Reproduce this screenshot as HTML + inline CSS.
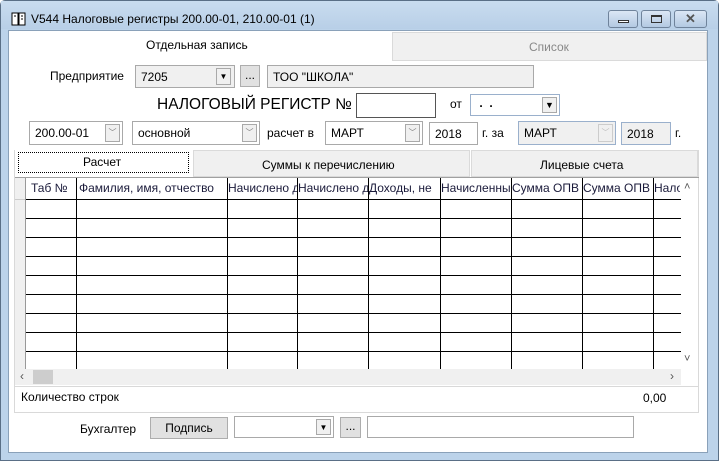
<!DOCTYPE html><html><head><meta charset="utf-8"><style>
*{box-sizing:border-box;margin:0;padding:0}
body{width:719px;height:461px;overflow:hidden;background:#fff;font-family:"Liberation Sans",sans-serif;font-size:12px;color:#000;position:relative}
.a{position:absolute}
.box{position:absolute;border:1px solid #a9a9a9;background:#fff;padding:2px 0 0 5px;white-space:nowrap;overflow:hidden}
.g{background:#f0f0f0}
.dd{position:absolute;width:15px;border:1px solid #a9a9a9;background:#f0f0f0;font-size:8px;text-align:center;line-height:15px}
.t{position:absolute;white-space:nowrap}
.btn{position:absolute;border:1px solid #adadad;background:#e1e1e1;text-align:center}
.vl{position:absolute;width:1px;background:#000;top:178px;height:191px}
.hl{position:absolute;height:1px;background:#000;left:25px;width:656px}
.hd{position:absolute;top:181px;white-space:nowrap;overflow:hidden;color:#1a1a3a}
</style></head><body>
<div class="a" style="left:0;top:0;width:719px;height:461px;background:#bcd3ea;border:1px solid #5a6f86;border-radius:5px 5px 0 0"></div>
<div class="a" style="left:1px;top:1px;width:717px;height:28px;background:linear-gradient(#c9dcef,#b8cfe7)"></div>
<div class="a" style="left:8px;top:30px;width:700px;height:423px;background:#fff;border:1px solid #8aa1b9"></div>
<svg class="a" style="left:11px;top:12px" width="16" height="14"><rect x="1" y="1" width="6" height="12" fill="#fff" stroke="#000"/><rect x="8" y="1" width="6" height="12" fill="#fff" stroke="#000"/><line x1="3" y1="4" x2="5" y2="4" stroke="#000"/><line x1="10" y1="4" x2="12" y2="4" stroke="#000"/><line x1="10" y1="7" x2="12" y2="7" stroke="#000"/></svg>
<div class="t" style="left:31px;top:12px;font-size:12px">V544 Налоговые регистры 200.00-01, 210.00-01 (1)</div>
<div class="a" style="left:608px;top:10px;width:30px;height:18px;border:1px solid #6f839b;border-radius:3px;background:linear-gradient(#dbe7f5,#b3c9e2)"><div class="a" style="left:9px;top:9px;width:11px;height:3px;background:#fff;border:1px solid #333"></div></div>
<div class="a" style="left:641px;top:10px;width:30px;height:18px;border:1px solid #6f839b;border-radius:3px;background:linear-gradient(#dbe7f5,#b3c9e2)"><div class="a" style="left:9px;top:4px;width:11px;height:8px;border:1px solid #333;border-top-width:2px"></div></div>
<div class="a" style="left:674px;top:10px;width:33px;height:18px;border:1px solid #6f839b;border-radius:3px;background:linear-gradient(#dbe7f5,#b3c9e2);text-align:center;font-size:13px;font-weight:bold;color:#555;line-height:15px">✕</div>
<div class="t" style="left:146px;top:38px">Отдельная запись</div>
<div class="a" style="left:392px;top:32px;width:315px;height:29px;background:#f0f0f0;border:1px solid #dadada"></div>
<div class="t" style="left:529px;top:40px;color:#888">Список</div>
<div class="t" style="left:50px;top:69px">Предприятие</div>
<div class="box g" style="left:135px;top:65px;width:100px;height:23px;padding-top:4px">7205</div>
<div class="dd" style="left:216px;top:68px;height:17px">▼</div>
<div class="btn" style="left:240px;top:65px;width:20px;height:22px;line-height:18px">...</div>
<div class="box g" style="left:267px;top:65px;width:267px;height:23px;padding-top:4px">ТОО "ШКОЛА"</div>
<div class="t" style="left:157px;top:96px;font-size:15.5px">НАЛОГОВЫЙ РЕГИСТР №</div>
<div class="a" style="left:356px;top:93px;width:80px;height:25px;border:1px solid #555"></div>
<div class="t" style="left:450px;top:97px">от</div>
<div class="box" style="left:470px;top:94px;width:90px;height:22px;border-color:#9ab0cc;padding-top:1px;font-weight:bold">&nbsp;.&nbsp;&nbsp;.</div>
<div class="dd" style="left:542px;top:97px;height:16px;font-size:9px">▼</div>
<div class="box" style="left:29px;top:121px;width:94px;height:24px;padding-top:4px">200.00-01</div>
<div class="dd" style="left:105px;top:124px;height:18px;color:#777">﹀</div>
<div class="box" style="left:132px;top:121px;width:128px;height:24px;padding-top:4px">основной</div>
<div class="dd" style="left:242px;top:124px;height:18px;color:#777">﹀</div>
<div class="t" style="left:267px;top:126px">расчет в</div>
<div class="box" style="left:325px;top:121px;width:98px;height:24px;padding-top:4px">МАРТ</div>
<div class="dd" style="left:405px;top:124px;height:18px;color:#777">﹀</div>
<div class="box" style="left:429px;top:122px;width:49px;height:23px;padding-top:4px">2018</div>
<div class="t" style="left:482px;top:126px">г. за</div>
<div class="box g" style="left:518px;top:121px;width:98px;height:24px;padding-top:4px;border-color:#9ab0cc">МАРТ</div>
<div class="dd" style="left:598px;top:124px;height:18px;color:#bbb;border-color:#ccc">﹀</div>
<div class="box g" style="left:621px;top:122px;width:50px;height:23px;padding-top:4px;border-color:#9ab0cc">2018</div>
<div class="t" style="left:675px;top:126px">г.</div>
<div class="a" style="left:14px;top:150px;width:1px;height:263px;background:#d9d9d9"></div>
<div class="a" style="left:698px;top:150px;width:1px;height:263px;background:#d9d9d9"></div>
<div class="a" style="left:14px;top:412px;width:685px;height:1px;background:#d9d9d9"></div>
<div class="a" style="left:18px;top:152px;width:171px;height:21px;border:1px dotted #000"></div>
<div class="t" style="left:83px;top:155px">Расчет</div>
<div class="a" style="left:193px;top:150px;width:277px;height:27px;background:#f0f0f0;border:1px solid #dadada"></div>
<div class="t" style="left:262px;top:158px">Суммы к перечислению</div>
<div class="a" style="left:471px;top:150px;width:227px;height:27px;background:#f0f0f0;border:1px solid #dadada"></div>
<div class="t" style="left:540px;top:158px">Лицевые счета</div>
<div class="a" style="left:15px;top:177px;width:684px;height:1px;background:#a0a0a0"></div>
<div class="a" style="left:15px;top:178px;width:10px;height:191px;background:#f0f0f0"></div>
<div class="hl" style="top:199px"></div><div class="hl" style="top:218px"></div><div class="hl" style="top:237px"></div><div class="hl" style="top:256px"></div><div class="hl" style="top:275px"></div><div class="hl" style="top:294px"></div><div class="hl" style="top:313px"></div><div class="hl" style="top:332px"></div><div class="hl" style="top:351px"></div>
<div class="a" style="left:15px;top:199px;width:10px;height:1px;background:#ccc"></div>
<div class="vl" style="left:25px;background:#999"></div>
<div class="vl" style="left:76px"></div><div class="vl" style="left:227px"></div><div class="vl" style="left:297px"></div><div class="vl" style="left:368px"></div><div class="vl" style="left:440px"></div><div class="vl" style="left:511px"></div><div class="vl" style="left:582px"></div><div class="vl" style="left:653px"></div>
<div class="hd" style="left:31px;width:45px">Таб №</div>
<div class="hd" style="left:79px;width:147px">Фамилия, имя, отчество</div>
<div class="hd" style="left:228px;width:69px">Начислено д</div>
<div class="hd" style="left:298px;width:70px">Начислено д</div>
<div class="hd" style="left:369px;width:71px">Доходы, не</div>
<div class="hd" style="left:441px;width:70px">Начисленны</div>
<div class="hd" style="left:512px;width:70px">Сумма ОПВ :</div>
<div class="hd" style="left:583px;width:70px">Сумма ОПВ (</div>
<div class="hd" style="left:654px;width:26px">Нало</div>
<div class="a" style="left:681px;top:178px;width:17px;height:191px;background:#fff"></div>
<div class="t" style="left:684px;top:181px;font-size:11px;color:#555">˄</div>
<div class="t" style="left:684px;top:353px;font-size:11px;color:#555">˅</div>
<div class="a" style="left:15px;top:369px;width:666px;height:16px;background:#f0f0f0"></div>
<div class="a" style="left:33px;top:370px;width:20px;height:14px;background:#cdcdcd"></div>
<div class="t" style="left:20px;top:369px;color:#555;font-size:12px">‹</div>
<div class="t" style="left:670px;top:369px;color:#555;font-size:12px">›</div>
<div class="a" style="left:15px;top:386px;width:684px;height:1px;background:#d9d9d9"></div>
<div class="t" style="left:21px;top:390px">Количество строк</div>
<div class="t" style="left:643px;top:391px">0,00</div>
<div class="t" style="left:80px;top:422px">Бухгалтер</div>
<div class="btn" style="left:150px;top:417px;width:78px;height:22px;line-height:20px">Подпись</div>
<div class="box" style="left:234px;top:416px;width:100px;height:22px"></div>
<div class="dd" style="left:316px;top:419px;height:16px">▼</div>
<div class="btn" style="left:340px;top:417px;width:21px;height:21px;line-height:17px">...</div>
<div class="box" style="left:367px;top:416px;width:267px;height:22px"></div>
</body></html>
